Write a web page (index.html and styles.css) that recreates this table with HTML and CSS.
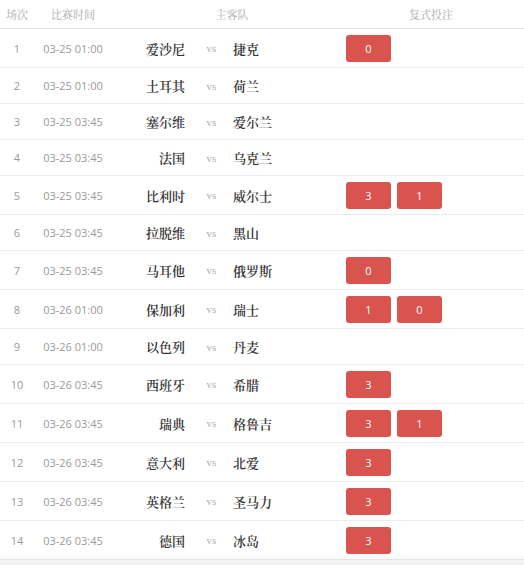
FILE: index.html
```html
<!DOCTYPE html>
<html lang="zh">
<head>
<meta charset="utf-8">
<link rel="stylesheet" href="styles.css">
</head>
<body>
<div class="table">
  <div class="row head">
    <div class="h-no">场次</div>
    <div class="h-time">比赛时间</div>
    <div class="h-match">主客队</div>
    <div class="h-bet">复式投注</div>
  </div>
  <div class="row bt"><div class="c-no">1</div><div class="c-time">03-25 01:00</div><div class="home">爱沙尼</div><div class="vs">vs</div><div class="away">捷克</div><div class="c-bet"><span class="btn">0</span></div></div>
  <div class="row"><div class="c-no">2</div><div class="c-time">03-25 01:00</div><div class="home">土耳其</div><div class="vs">vs</div><div class="away">荷兰</div><div class="c-bet"></div></div>
  <div class="row"><div class="c-no">3</div><div class="c-time">03-25 03:45</div><div class="home">塞尔维</div><div class="vs">vs</div><div class="away">爱尔兰</div><div class="c-bet"></div></div>
  <div class="row"><div class="c-no">4</div><div class="c-time">03-25 03:45</div><div class="home">法国</div><div class="vs">vs</div><div class="away">乌克兰</div><div class="c-bet"></div></div>
  <div class="row bt"><div class="c-no">5</div><div class="c-time">03-25 03:45</div><div class="home">比利时</div><div class="vs">vs</div><div class="away">威尔士</div><div class="c-bet"><span class="btn">3</span><span class="btn">1</span></div></div>
  <div class="row"><div class="c-no">6</div><div class="c-time">03-25 03:45</div><div class="home">拉脱维</div><div class="vs">vs</div><div class="away">黑山</div><div class="c-bet"></div></div>
  <div class="row bt"><div class="c-no">7</div><div class="c-time">03-25 03:45</div><div class="home">马耳他</div><div class="vs">vs</div><div class="away">俄罗斯</div><div class="c-bet"><span class="btn">0</span></div></div>
  <div class="row bt"><div class="c-no">8</div><div class="c-time">03-26 01:00</div><div class="home">保加利</div><div class="vs">vs</div><div class="away">瑞士</div><div class="c-bet"><span class="btn">1</span><span class="btn">0</span></div></div>
  <div class="row"><div class="c-no">9</div><div class="c-time">03-26 01:00</div><div class="home">以色列</div><div class="vs">vs</div><div class="away">丹麦</div><div class="c-bet"></div></div>
  <div class="row bt"><div class="c-no">10</div><div class="c-time">03-26 03:45</div><div class="home">西班牙</div><div class="vs">vs</div><div class="away">希腊</div><div class="c-bet"><span class="btn">3</span></div></div>
  <div class="row bt"><div class="c-no">11</div><div class="c-time">03-26 03:45</div><div class="home">瑞典</div><div class="vs">vs</div><div class="away">格鲁吉</div><div class="c-bet"><span class="btn">3</span><span class="btn">1</span></div></div>
  <div class="row bt"><div class="c-no">12</div><div class="c-time">03-26 03:45</div><div class="home">意大利</div><div class="vs">vs</div><div class="away">北爱</div><div class="c-bet"><span class="btn">3</span></div></div>
  <div class="row bt"><div class="c-no">13</div><div class="c-time">03-26 03:45</div><div class="home">英格兰</div><div class="vs">vs</div><div class="away">圣马力</div><div class="c-bet"><span class="btn">3</span></div></div>
  <div class="row bt"><div class="c-no">14</div><div class="c-time">03-26 03:45</div><div class="home">德国</div><div class="vs">vs</div><div class="away">冰岛</div><div class="c-bet"><span class="btn">3</span></div></div>
</div>
<div class="shade"></div>
</body>
</html>
```

FILE: styles.css
```css
html, body {
  margin: 0;
  padding: 0;
  background: #fff;
}
body {
  width: 524px;
  height: 565px;
  overflow: hidden;
  position: relative;
}
.table {
  width: 524px;
}
.row {
  display: grid;
  grid-template-columns: 34px 86px 75px 33px 110px 1fr;
  align-items: center;
  height: 36px;
  border-bottom: 1px solid #ececec;
  box-sizing: border-box;
}
.row.bt {
  height: 39px;
}
.row.head {
  height: 29px;
  grid-template-columns: 34px 86px 218px 1fr;
  border-bottom: 1px solid #e6e6e6;
}
.head > div {
  font-family: "Noto Serif CJK SC", "Noto Sans CJK SC", serif;
  font-size: 11px;
  color: #a8a8a8;
  text-align: center;
}
.head .h-time {
  padding-right: 8px;
}
.head .h-match {
  padding-left: 6px;
}
.c-no {
  text-align: center;
  font-family: "Open Sans", sans-serif;
  font-size: 11px;
  color: #9a9a9a;
}
.c-time {
  text-align: center;
  padding-right: 8px;
  font-family: "Open Sans", sans-serif;
  font-size: 11px;
  color: #9a9a9a;
}
.home, .away {
  font-family: "Noto Serif CJK SC", "Noto Sans CJK SC", serif;
  font-size: 13px;
  color: #333;
  font-weight: 600;
}
.home {
  text-align: right;
  padding-right: 10px;
}
.away {
  padding-left: 5px;
}
.vs {
  text-align: center;
  font-family: "Liberation Serif", serif;
  font-size: 11px;
  color: #b0b0b0;
}
.c-bet {
  display: flex;
  gap: 6px;
  padding-left: 8px;
}
.btn {
  display: inline-flex;
  align-items: center;
  justify-content: center;
  width: 45px;
  height: 27px;
  border-radius: 3px;
  background: #d9534f;
  color: #fff;
  font-family: "Open Sans", sans-serif;
  font-size: 11px;
}
.shade {
  position: absolute;
  left: 0;
  right: 0;
  bottom: 0;
  height: 12px;
  background: linear-gradient(to bottom, rgba(0,0,0,0), rgba(0,0,0,0.06));
  pointer-events: none;
}
```
